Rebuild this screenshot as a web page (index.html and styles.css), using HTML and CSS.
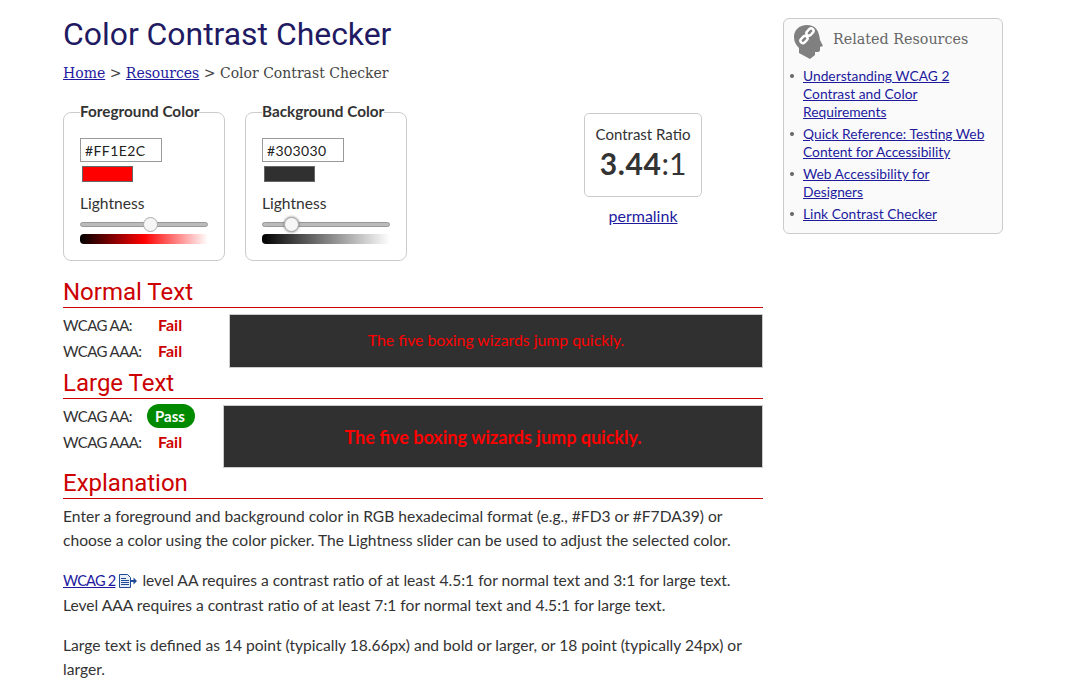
FILE: index.html
```html
<!DOCTYPE html>
<html lang="en">
<head>
<meta charset="utf-8">
<title>Color Contrast Checker</title>
<link rel="stylesheet" href="styles.css">
</head>
<body>
<div class="page">
  <main class="main">
    <h1>Color Contrast Checker</h1>
    <nav class="crumbs"><a href="#">Home</a> &gt; <a href="#">Resources</a> &gt; Color Contrast Checker</nav>
    <div class="controls">
      <fieldset class="picker">
        <legend>Foreground Color</legend>
        <div class="hex">#FF1E2C</div>
        <div class="swatch fg"></div>
        <div class="light-label">Lightness</div>
        <div class="slider"><span class="thumb thumb-fg"></span></div>
        <div class="grad grad-fg"></div>
      </fieldset>
      <fieldset class="picker">
        <legend>Background Color</legend>
        <div class="hex">#303030</div>
        <div class="swatch bg"></div>
        <div class="light-label">Lightness</div>
        <div class="slider"><span class="thumb thumb-bg"></span></div>
        <div class="grad grad-bg"></div>
      </fieldset>
      <div class="ratio-wrap">
        <div class="ratio">
          <div class="ratio-label">Contrast Ratio</div>
          <div class="ratio-val"><b>3.44</b>:1</div>
        </div>
        <a class="permalink" href="#">permalink</a>
      </div>
    </div>

    <h2>Normal Text</h2>
    <div class="result normal">
      <div class="scores">
        <div class="score"><span class="lvl">WCAG AA:</span><span class="fail">Fail</span></div>
        <div class="score"><span class="lvl">WCAG AAA:</span><span class="fail">Fail</span></div>
      </div>
      <div class="demo">The five boxing wizards jump quickly.</div>
    </div>

    <h2>Large Text</h2>
    <div class="result large">
      <div class="scores">
        <div class="score"><span class="lvl">WCAG AA:</span><span class="pass">Pass</span></div>
        <div class="score"><span class="lvl">WCAG AAA:</span><span class="fail">Fail</span></div>
      </div>
      <div class="demo">The five boxing wizards jump quickly.</div>
    </div>

    <h2>Explanation</h2>
    <p>Enter a foreground and background color in RGB hexadecimal format (e.g., #FD3 or #F7DA39) or<br>choose a color using the color picker. The Lightness slider can be used to adjust the selected color.</p>
    <p><a class="wcag" href="#">WCAG 2</a> <svg class="doc" viewBox="0 0 18 14" width="18" height="14" aria-hidden="true"><path d="M.5.5h8l3 3v10H.5z" fill="#e8eef8" stroke="#1f4a96"/><path d="M2 4.500h5M2 6.500h8M2 8.500h8M2 10.500h8" stroke="#1f4a96"/><path d="M12 6h2.500V3.500L18 7l-3.500 3.500V8H12z" fill="#1f4a96"/></svg> level AA requires a contrast ratio of at least 4.5:1 for normal text and 3:1 for large text.<br>Level AAA requires a contrast ratio of at least 7:1 for normal text and 4.5:1 for large text.</p>
    <p>Large text is defined as 14 point (typically 18.66px) and bold or larger, or 18 point (typically 24px) or<br>larger.</p>
  </main>
  <aside class="side">
    <div class="side-head">
      <svg class="head-icon" viewBox="0 0 29 34" width="29" height="34" aria-hidden="true">
        <path d="M13 0C5 0 0 5 0 12c0 5 2 8 5 11v5l11 6 5-4v-3h3c1 0 2-1 2-2v-3l3-1-3-6C25 5 21 0 13 0z" fill="#808080"/>
        <g fill="none" stroke="#fff" stroke-width="2.400">
          <rect x="12" y="4.500" width="8" height="5" rx="2.500" transform="rotate(-45 16 7)"/>
          <rect x="6" y="12" width="8" height="5" rx="2.500" transform="rotate(-45 10 14.500)"/>
        </g>
      </svg>
      <span class="side-title">Related Resources</span>
    </div>
    <ul>
      <li><a href="#">Understanding WCAG 2 Contrast and Color Requirements</a></li>
      <li><a href="#">Quick Reference: Testing Web Content for Accessibility</a></li>
      <li><a href="#">Web Accessibility for Designers</a></li>
      <li><a href="#">Link Contrast Checker</a></li>
    </ul>
  </aside>
</div>
</body>
</html>
```

FILE: styles.css
```css
* { box-sizing: border-box; }
html, body { margin: 0; height: 686px; overflow: hidden; background: #fff; }
body { font-family: Lato, "Noto Sans", sans-serif; font-size: 15.600px; color: #333; }
a { color: #1d1a9e; }
.page { display: flex; gap: 20px; padding: 0 0 0 63px; align-items: flex-start; }
.main { width: 700px; flex: none; }
h1 { margin: 14px 0 0; font: 400 31.900px/40px Roboto, sans-serif; color: #211a63; }
.crumbs { margin-top: 9px; font: 14px/20px "DejaVu Serif", serif; color: #444; }
.controls { display: flex; margin-top: 19px; align-items: flex-start; }
.picker { width: 162px; height: 159px; margin: 0 20px 0 0; padding: 15px 16px 0; border: 1px solid #ccc; border-radius: 8px; min-width: 0; }
.picker legend { padding: 0 0 2px; font-weight: 700; font-size: 15.300px; line-height: 18px; color: #333; }
.hex { width: 82px; height: 24px; margin-top: 1px; border: 1px solid #999; padding: 0 4px; font-size: 14px; line-height: 23px; letter-spacing: .4px; color: #222; }
.swatch { width: 51px; height: 16px; margin: 4px 0 0 2px; border: 1px solid #666; }
.fg { background: #f00; }
.bg { background: #303030; }
.light-label { margin-top: 11px; line-height: 20px; font-size: 15.600px; }
.slider { position: relative; height: 5px; width: 128px; margin-top: 9px; background: #bbb; border: 1px solid #999; border-radius: 3px; }
.thumb { position: absolute; top: -6px; width: 15px; height: 15px; border-radius: 50%; background: #f6f6f6; border: 1px solid #aaa; }
.thumb-fg { left: 62px; }
.thumb-bg { left: 21px; box-shadow: 0 0 3px #777; }
.grad { width: 128px; height: 10px; margin-top: 7px; border-radius: 4px 0 0 4px; }
.grad-fg { background: linear-gradient(to right, #000, #f00 50%, #fff); }
.grad-bg { background: linear-gradient(to right, #000, #fff); }
.ratio-wrap { margin-left: 157px; margin-top: 11px; width: 118px; flex: none; text-align: center; }
.ratio { height: 84px; border: 1px solid #ccc; border-radius: 5px; padding-top: 10px; }
.ratio-label { font-size: 15px; line-height: 21px; }
.ratio-val { font-size: 30px; line-height: 36px; }
.ratio-val b { font-weight: 700; letter-spacing: .6px; }
.permalink { display: block; margin-top: 9px; font-size: 16px; line-height: 20px; }
h2 { margin: 0; font: 400 24px/30px Roboto, sans-serif; color: #c00; border-bottom: 1px solid #c00; height: 31px; }
.main > h2:first-of-type { margin-top: 16px; }
.result { display: flex; }
.scores { flex: none; margin-top: -2px; }
.score { display: flex; align-items: center; height: 26px; }
.lvl { width: 95px; font-size: 15px; letter-spacing: -.6px; }
.fail { color: #c00; font-weight: 700; font-size: 16px; margin-bottom: 2px; }
.pass { margin-left: -11px; padding: 0 9px 0 8px; width: 48px; height: 24px; line-height: 24px; border-radius: 12px; background: #008a00; color: #fff; font-weight: 700; font-size: 15px; }
.demo { flex: 1; background: #303030; border: 1px solid #ccc; color: #f00; display: flex; align-items: center; justify-content: center; }
.normal { height: 60px; padding-top: 6px; }
.normal .scores { width: 166px; }
.normal .demo { height: 54px; padding-bottom: 3px; font-size: 15.800px; }
.large { height: 63px; padding-top: 6px; }
.large .scores { width: 160px; }
.large .demo { height: 63px; font-size: 18px; font-weight: 700; }
.main > h2:last-of-type { margin-top: 6px; }
p { margin: 0 0 16px; line-height: 24px; }
.main > h2:last-of-type + p { margin-top: 5px; }
.wcag { font-size: 14.600px; letter-spacing: -.8px; }
.doc { vertical-align: 0; margin: -2px 1px -2px 0; }
.side { width: 220px; flex: none; margin-top: 18px; height: 216px; background: #fafafa; border: 1px solid #ccc; border-radius: 6px; padding: 5px 10px 0; }
.side-head { display: flex; align-items: center; height: 35px; }
.head-icon { margin-right: 10px; flex: none; }
.side-title { font: 14.300px/20px "DejaVu Serif", serif; color: #666; margin-top: -6px; }
.side ul { margin: 8px 0 0; padding: 0 0 0 9px; list-style: none; }
.side li { position: relative; font-size: 13.800px; line-height: 18px; margin-bottom: 4px; }
.side li::before { content: ""; position: absolute; left: -13px; top: 7px; width: 4px; height: 4px; border-radius: 50%; background: #666; }
```
